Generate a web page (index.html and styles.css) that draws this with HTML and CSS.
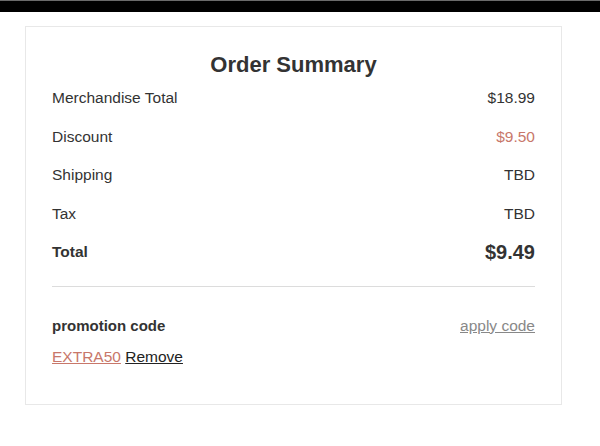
FILE: index.html
```html
<!DOCTYPE html>
<html lang="en">
<head>
  <meta charset="UTF-8" />
  <meta name="viewport" content="width=device-width, initial-scale=1.0"/>
  <title>Order Summary</title>
  <link rel="stylesheet" href="styles.css">
</head>
<body>

  <div class="topbar"></div>

  <div class="summary">
    <h2>Order Summary</h2>

    <div class="row">
      <span>Merchandise Total</span>
      <span>$18.99</span>
    </div>
    <div class="row">
      <span>Discount</span>
      <span class="discount">$9.50</span>
    </div>
    <div class="row">
      <span>Shipping</span>
      <span>TBD</span>
    </div>
    <div class="row">
      <span>Tax</span>
      <span>TBD</span>
    </div>
    <div class="row total">
      <span>Total</span>
      <span class="amount">$9.49</span>
    </div>

    <div class="divider"></div>

    <div class="promo">
      <span class="promo-label">promotion code</span>
      <a href="#" class="apply">apply code</a>
    </div>
    <div class="codes">
      <a href="#" class="code">EXTRA50</a>
      <a href="#" class="remove">Remove</a>
    </div>
  </div>

</body>
</html>
```

FILE: styles.css
```css
* {
  box-sizing: border-box;
  margin: 0;
  padding: 0;
  font-family: "Liberation Sans", Arial, sans-serif;
}

body {
  background-color: #fff;
  color: #333;
}

.topbar {
  height: 12px;
  background-color: #000;
  border-top: 1px solid #6a6a6a;
}

.summary {
  width: 537px;
  margin: 14px 0 0 25px;
  padding: 25px 26px 0;
  height: 379px;
  border: 1px solid #e8e8e8;
}

.summary h2 {
  text-align: center;
  font-size: 22px;
  line-height: 26px;
  margin-bottom: 1px;
  color: #333;
}

.row {
  display: flex;
  justify-content: space-between;
  align-items: center;
  height: 38.5px;
  font-size: 15.5px;
}

.discount {
  color: #c8776a;
}

.total {
  font-weight: bold;
}

.total .amount {
  font-size: 20px;
}

.divider {
  margin-top: 14px;
  border-top: 1px solid #dcdcdc;
}

.promo {
  display: flex;
  justify-content: space-between;
  align-items: center;
  margin-top: 29px;
  height: 20px;
  font-size: 15.5px;
}

.promo-label {
  font-size: 15px;
  font-weight: bold;
}

.apply {
  color: #888;
}

.codes {
  margin-top: 11px;
  height: 20px;
  line-height: 20px;
  font-size: 15.5px;
}

.code {
  color: #c8776a;
}

.remove {
  color: #222;
}
```
